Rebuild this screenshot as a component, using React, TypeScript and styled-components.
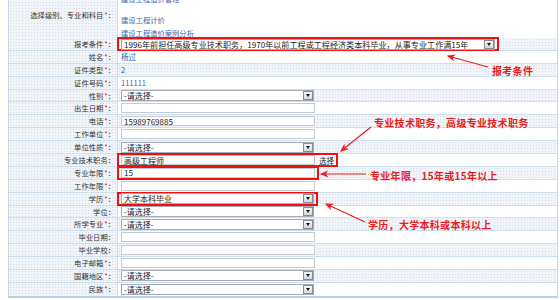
import styled, { createGlobalStyle, css } from 'styled-components'

const GlobalStyle = createGlobalStyle`
  html, body {
    margin: 0;
    padding: 0;
    background: #fff;
    overflow: hidden;
  }
  body {
    font-family: "Noto Sans CJK SC", "Liberation Sans", sans-serif;
  }
`

const dotted = css`
  background-color: #f1f5f9;
  background-image: radial-gradient(circle, #d3dde8 0.7px, transparent 0.9px);
  background-size: 3px 3px;
`

type Field =
  | { kind: 'text'; value: string }
  | { kind: 'select'; value?: string }
  | { kind: 'input'; value?: string }

type FieldRow = {
  label: string
  required?: boolean
  field: Field
  mark?: boolean
  pick?: boolean
}

const rows: FieldRow[] = [
  { label: '姓名', required: true, field: { kind: 'text', value: '杨过' } },
  { label: '证件类型', required: true, field: { kind: 'text', value: '2' } },
  { label: '证件号码', required: true, field: { kind: 'text', value: '111111' } },
  { label: '性别', required: true, field: { kind: 'select' } },
  { label: '出生日期', required: true, field: { kind: 'input' } },
  { label: '电话', required: true, field: { kind: 'input', value: '15989769885' } },
  { label: '工作单位', required: true, field: { kind: 'input' } },
  { label: '单位性质', required: true, field: { kind: 'select' } },
  { label: '专业技术职务', field: { kind: 'input', value: '高级工程师' }, mark: true, pick: true },
  { label: '专业年限', required: true, field: { kind: 'input', value: '15' }, mark: true },
  { label: '工作年限', required: true, field: { kind: 'input' } },
  { label: '学历', required: true, field: { kind: 'select', value: '大学本科毕业' }, mark: true },
  { label: '学位', field: { kind: 'select' } },
  { label: '所学专业', required: true, field: { kind: 'select' } },
  { label: '毕业日期', field: { kind: 'input' } },
  { label: '毕业学校', field: { kind: 'input' } },
  { label: '电子邮箱', required: true, field: { kind: 'input' } },
  { label: '国籍地区', required: true, field: { kind: 'select' } },
  { label: '民族', required: true, field: { kind: 'select' } },
]

const subjects = ['建设工程造价管理', '建设工程计价', '建设工程造价案例分析']

const condition =
  '1996年前担任高级专业技术职务，1970年以前工程或工程经济类本科毕业，从事专业工作满15年'

function renderField(field: Field) {
  if (field.kind === 'text') return <PlainValue>{field.value}</PlainValue>
  if (field.kind === 'select') {
    return (
      <SelectBox $w={193}>
        <span>{field.value ?? '-请选择-'}</span>
        <DropButton />
      </SelectBox>
    )
  }
  return <TextBox $w={194}>{field.value}</TextBox>
}

export default function App() {
  return (
    <Screen>
      <GlobalStyle />
      <Form>
        <Row $tall>
          <Label>
            选择级别、专业和科目<Req>*</Req>：
          </Label>
          <Value>
            <SubjectList>
              {subjects.map((s) => (
                <SubjectLink key={s}>{s}</SubjectLink>
              ))}
            </SubjectList>
          </Value>
        </Row>
        <Row>
          <Label>
            报考条件<Req>*</Req>：
          </Label>
          <Value $shade>
            <Highlight>
              <SelectBox $w={374} $large>
                <span>{condition}</span>
                <DropButton />
              </SelectBox>
            </Highlight>
          </Value>
        </Row>
        {rows.map((r, i) => {
          const body = (
            <>
              {renderField(r.field)}
              {r.pick && <PickLink>选择</PickLink>}
            </>
          )
          return (
            <Row key={r.label}>
              <Label>
                {r.label}
                {r.required && <Req>*</Req>}：
              </Label>
              <Value $shade={i % 2 === 1}>{r.mark ? <Highlight>{body}</Highlight> : body}</Value>
            </Row>
          )
        })}
      </Form>

      <Arrows width="560" height="300" viewBox="0 0 560 300">
        <defs>
          <marker id="head" markerWidth="7" markerHeight="6" refX="6" refY="3" orient="auto">
            <path d="M0,0 L7,3 L0,6 L2,3 Z" fill="#ec1c1c" />
          </marker>
        </defs>
        <line x1="488" y1="67" x2="448" y2="56" stroke="#ec1c1c" strokeWidth="1.2" markerEnd="url(#head)" />
        <line x1="371" y1="127" x2="341" y2="151" stroke="#ec1c1c" strokeWidth="1.2" markerEnd="url(#head)" />
        <line x1="366" y1="174" x2="321" y2="174" stroke="#ec1c1c" strokeWidth="1.2" markerEnd="url(#head)" />
        <line x1="365" y1="222" x2="326" y2="204" stroke="#ec1c1c" strokeWidth="1.2" markerEnd="url(#head)" />
      </Arrows>
      <Note $x={492} $y={65}>报考条件</Note>
      <Note $x={374} $y={117}>专业技术职务，高级专业技术职务</Note>
      <Note $x={370} $y={170}>专业年限，15年或15年以上</Note>
      <Note $x={368} $y={219}>学历，大学本科或本科以上</Note>
    </Screen>
  )
}

const Screen = styled.div`
  position: relative;
  width: 560px;
  height: 300px;
  overflow: hidden;
  background: #fff;
`

const Form = styled.div`
  display: flex;
  flex-direction: column;
  width: 550px;
  margin: -12px 0 0 8px;
  box-sizing: border-box;
  border: 1px solid #c6d8ea;
  border-bottom: 2px solid #b9cfe6;
`

const Row = styled.div<{ $tall?: boolean }>`
  display: grid;
  grid-template-columns: 109px 1fr;
  box-sizing: border-box;
  height: ${(p) => (p.$tall ? '49px' : '12.9px')};
  border-bottom: 1px solid #d0dfed;

  &:last-child {
    border-bottom: none;
  }
`

const Label = styled.div`
  ${dotted}
  display: flex;
  align-items: center;
  justify-content: flex-end;
  padding-right: 2px;
  border-right: 1px solid #d0dfed;
  font-size: 7.3px;
  color: #333;
  white-space: nowrap;
`

const Req = styled.span`
  color: #f01010;
  margin-left: 1px;
`

const Value = styled.div<{ $shade?: boolean }>`
  ${(p) => (p.$shade ? dotted : 'background: #fff;')}
  display: flex;
  align-items: center;
  padding-left: 3px;
  font-size: 7.3px;
  white-space: nowrap;
  overflow: visible;
`

const SubjectList = styled.div`
  display: flex;
  flex-direction: column;
  align-self: flex-start;
  margin-top: 4px;
  line-height: 13px;

  & > :first-child {
    margin-bottom: 8px;
  }
`

const SubjectLink = styled.span`
  color: #3768b0;
`

const PlainValue = styled.span`
  color: #2f62a8;
  font-size: 7.5px;
`

const Highlight = styled.span`
  display: flex;
  align-items: center;
  gap: 4px;
  box-sizing: border-box;
  height: 14px;
  margin: -1px 0 -1px -4px;
  padding: 0 2px 0 2px;
  border: 2px solid #f20f0f;
`

const SelectBox = styled.span<{ $w: number; $large?: boolean }>`
  display: inline-flex;
  align-items: center;
  justify-content: space-between;
  box-sizing: border-box;
  width: ${(p) => p.$w}px;
  height: 11px;
  padding-left: 2px;
  border: 1px solid #a4adb7;
  background: #fff;
  font-size: ${(p) => (p.$large ? '8.1px' : '8px')};
  color: #1c1c1c;
  overflow: hidden;
`

const DropButton = styled.span`
  display: flex;
  align-items: center;
  justify-content: center;
  flex: none;
  box-sizing: border-box;
  width: 10px;
  height: 9px;
  margin-left: 3px;
  border: 1px solid #848d98;
  background: linear-gradient(#f6f6f6, #d6dadf);

  &::after {
    content: '';
    border-left: 2.5px solid transparent;
    border-right: 2.5px solid transparent;
    border-top: 3px solid #111;
  }
`

const TextBox = styled.span<{ $w: number }>`
  display: inline-flex;
  align-items: center;
  box-sizing: border-box;
  width: ${(p) => p.$w}px;
  height: 10px;
  padding-left: 2px;
  border: 1px solid #c2cad3;
  background: #fff;
  font-size: 8px;
  color: #1c1c1c;
`

const PickLink = styled.span`
  font-size: 7.5px;
  color: #222;
`

const Arrows = styled.svg`
  position: absolute;
  left: 0;
  top: 0;
  pointer-events: none;
`

const Note = styled.div<{ $x: number; $y: number }>`
  position: absolute;
  left: ${(p) => p.$x}px;
  top: ${(p) => p.$y}px;
  font-size: 10px;
  line-height: 12px;
  font-weight: 700;
  letter-spacing: 0.3px;
  color: #ec1c1c;
  white-space: nowrap;
`
